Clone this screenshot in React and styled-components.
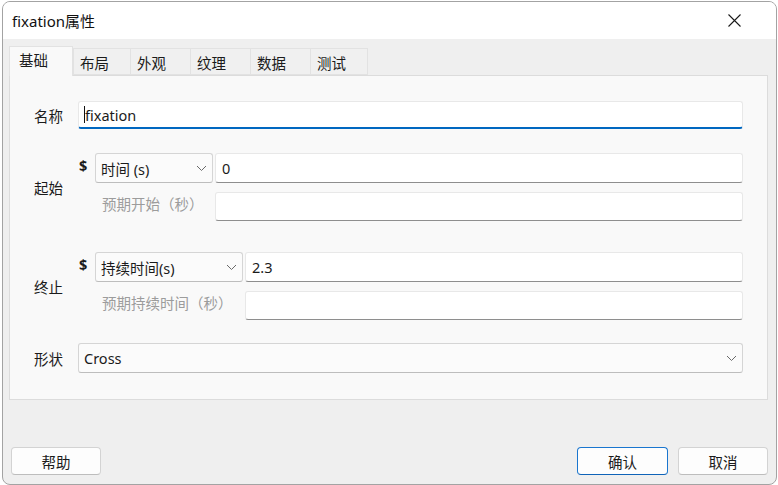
import React from "react";
import styled, { createGlobalStyle } from "styled-components";

const Global = createGlobalStyle`
  html, body { margin: 0; padding: 0; background: #ffffff; }
  body {
    width: 778px; height: 485px; overflow: hidden;
    font-family: "Noto Sans", "Noto Sans CJK SC", sans-serif;
    color: #1b1b1b;
  }
  * { box-sizing: border-box; }
`;

const Window = styled.div`
  margin: 1px 0 0 2px;
  width: 775px;
  height: 484px;
  border: 1px solid #a3a3a3;
  border-radius: 8px;
  overflow: hidden;
  display: flex;
  flex-direction: column;
  background: #efefef;
`;

const TitleBar = styled.div`
  height: 37px;
  flex: none;
  background: #ffffff;
  display: flex;
  align-items: center;
  justify-content: space-between;
  padding-left: 9px;
`;

const Title = styled.div`
  font-size: 15px;
  color: #111;
`;

const CloseButton = styled.div`
  width: 30px;
  height: 30px;
  margin-right: 27px;
  display: flex;
  align-items: center;
  justify-content: center;
`;

const Body = styled.div`
  flex: 1;
  display: flex;
  flex-direction: column;
  padding: 7px 8px 9px 6px;
`;

const TabBar = styled.div`
  display: flex;
  align-items: flex-end;
  height: 29px;
  position: relative;
  z-index: 1;
`;

const Tab = styled.div`
  width: ${(p) => p.$w}px;
  height: ${(p) => (p.$active ? "30px" : "27px")};
  margin-bottom: ${(p) => (p.$active ? "-1px" : "0")};
  padding-left: ${(p) => (p.$active ? "9px" : "6px")};
  padding-top: ${(p) => (p.$active ? "3px" : "4px")};
  background: ${(p) => (p.$active ? "#f9f9f9" : "#f0f0f0")};
  border: 1px solid #e2e2e2;
  border-bottom: ${(p) => (p.$active ? "none" : "1px solid #e2e2e2")};
  margin-right: ${(p) => (p.$active ? "0" : "-1px")};
  font-size: 14.5px;
  line-height: 20px;
  color: #1b1b1b;
`;

const Panel = styled.div`
  height: 325px;
  flex: none;
  background: #f9f9f9;
  border: 1px solid #dcdcdc;
  padding: 25px 24px 0 0;
  display: flex;
  flex-direction: column;
`;

const FieldRow = styled.div`
  display: flex;
  align-items: center;
  margin-top: ${(p) => p.$top || 0}px;
`;

const FieldLabel = styled.div`
  width: 68px;
  flex: none;
  padding-left: 24px;
  font-size: 14.5px;
  color: #1b1b1b;
`;

const FieldGroup = styled.div`
  flex: 1;
  display: flex;
  flex-direction: column;
  gap: 9px;
`;

const ControlLine = styled.div`
  display: flex;
  align-items: stretch;
  height: ${(p) => p.$h || 30}px;
`;

const Dollar = styled.div`
  width: 17px;
  flex: none;
  padding-left: 1px;
  font-size: 14.5px;
  font-weight: 700;
  line-height: 18px;
  margin-top: 3px;
`;

const Combo = styled.div`
  width: ${(p) => (p.$w ? `${p.$w}px` : "auto")};
  flex: ${(p) => (p.$w ? "none" : "1")};
  height: ${(p) => p.$h || 30}px;
  display: flex;
  align-items: center;
  justify-content: space-between;
  padding: 0 5px 0 5px;
  background: #fbfbfb;
  border: 1px solid #d5d5d5;
  border-bottom-color: #bdbdbd;
  border-radius: 3px;
  font-size: 14.5px;
  color: #1b1b1b;
`;

const TextBox = styled.div`
  flex: 1;
  margin-left: ${(p) => p.$ml || 0}px;
  height: ${(p) => p.$h || 30}px;
  display: flex;
  align-items: center;
  padding-left: ${(p) => p.$pl || 6}px;
  background: #ffffff;
  border: 1px solid #e8e8e8;
  border-bottom: ${(p) => (p.$focused ? "2px solid #0067c0" : "1px solid #8e8e8e")};
  border-radius: 3px;
  font-size: 14.5px;
  color: #1b1b1b;
`;

const Caret = styled.span`
  display: inline-block;
  width: 1px;
  height: 17px;
  background: #111;
`;

const HintLine = styled.div`
  display: flex;
  height: 29px;
  padding-left: 17px;
`;

const Hint = styled.div`
  width: ${(p) => p.$w}px;
  flex: none;
  padding-left: 7px;
  padding-top: 1px;
  font-size: 14.5px;
  color: #9c9c9c;
`;

const Footer = styled.div`
  margin-top: auto;
  display: flex;
  align-items: center;
  padding-left: 2px;
`;

const Spacer = styled.div`
  flex: 1;
`;

const Button = styled.div`
  width: ${(p) => p.$w || 90}px;
  height: 28px;
  margin-left: ${(p) => p.$ml || 0}px;
  display: flex;
  align-items: center;
  justify-content: center;
  background: #fdfdfd;
  border: 1px solid ${(p) => (p.$primary ? "#1a76cf" : "#d3d3d3")};
  border-bottom-color: ${(p) => (p.$primary ? "#0f63b8" : "#bdbdbd")};
  border-radius: 4px;
  font-size: 14.5px;
  color: #1b1b1b;
`;

const Chevron = () => (
  <svg width="11" height="7" viewBox="0 0 11 7">
    <path d="M1 1 L5.5 5.5 L10 1" fill="none" stroke="#6a6a6a" strokeWidth="1" />
  </svg>
);

const CloseIcon = () => (
  <svg width="13" height="13" viewBox="0 0 13 13">
    <path d="M0.5 0.5 L12.5 12.5 M12.5 0.5 L0.5 12.5" stroke="#1a1a1a" strokeWidth="1.1" fill="none" />
  </svg>
);

const TABS = [
  { label: "基础", w: 64 },
  { label: "布局", w: 58 },
  { label: "外观", w: 61 },
  { label: "纹理", w: 61 },
  { label: "数据", w: 61 },
  { label: "测试", w: 58 },
];

export default function App() {
  return (
    <>
      <Global />
      <Window>
        <TitleBar>
          <Title>fixation属性</Title>
          <CloseButton>
            <CloseIcon />
          </CloseButton>
        </TitleBar>
        <Body>
          <TabBar>
            {TABS.map((t, i) => (
              <Tab key={t.label} $active={i === 0} $w={t.w}>
                {t.label}
              </Tab>
            ))}
          </TabBar>
          <Panel>
            <FieldRow>
              <FieldLabel>名称</FieldLabel>
              <TextBox $focused $h={28} $pl={5}>
                <Caret />
                fixation
              </TextBox>
            </FieldRow>

            <FieldRow $top={24}>
              <FieldLabel>起始</FieldLabel>
              <FieldGroup>
                <ControlLine>
                  <Dollar>$</Dollar>
                  <Combo $w={118}>
                    <span>时间 (s)</span>
                    <Chevron />
                  </Combo>
                  <TextBox $ml={2}>0</TextBox>
                </ControlLine>
                <HintLine>
                  <Hint $w={118}>预期开始（秒）</Hint>
                  <TextBox $ml={2} $h={29} />
                </HintLine>
              </FieldGroup>
            </FieldRow>

            <FieldRow $top={31}>
              <FieldLabel>终止</FieldLabel>
              <FieldGroup>
                <ControlLine>
                  <Dollar>$</Dollar>
                  <Combo $w={148}>
                    <span>持续时间(s)</span>
                    <Chevron />
                  </Combo>
                  <TextBox $ml={2}>2.3</TextBox>
                </ControlLine>
                <HintLine>
                  <Hint $w={148}>预期持续时间（秒）</Hint>
                  <TextBox $ml={2} $h={29} />
                </HintLine>
              </FieldGroup>
            </FieldRow>

            <FieldRow $top={23}>
              <FieldLabel>形状</FieldLabel>
              <Combo $h={30}>
                <span>Cross</span>
                <Chevron />
              </Combo>
            </FieldRow>
          </Panel>
          <Footer>
            <Button>帮助</Button>
            <Spacer />
            <Button $primary $w={91}>确认</Button>
            <Button $ml={10}>取消</Button>
          </Footer>
        </Body>
      </Window>
    </>
  );
}
